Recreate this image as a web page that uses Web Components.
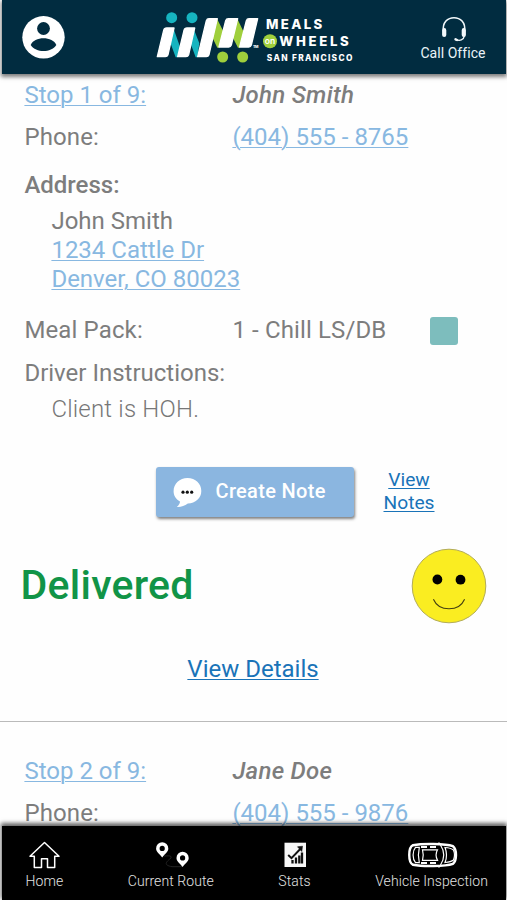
<!DOCTYPE html>
<html lang="en">
<head>
<meta charset="utf-8">
<title>Meals on Wheels San Francisco</title>
<style>
html,body{margin:0;height:100%}
body{background:#fefefe;overflow:hidden;font-family:Roboto,"Liberation Sans",sans-serif;color:#7d7d7d}
</style>
</head>
<body>
<route-app></route-app>
<script>
const define=(name,html)=>{
  const t=document.createElement('template');t.innerHTML=html;
  customElements.define(name,class extends HTMLElement{
    constructor(){super();this.attachShadow({mode:'open'}).append(t.content.cloneNode(true));}
  });
};

define('brand-logo',`<style>:host{display:block;width:200px;height:56px}svg{display:block;overflow:visible}</style>
<svg width="200" height="56" viewBox="155 9 200 56">
 <g transform="translate(150 0) scale(.33333)">
  <g fill="#16b4c0"><circle cx="65" cy="53" r="16.5"/><circle cx="126" cy="53" r="16.5"/>
   <path d="M70 84L90 140L82 172H77L60 125ZM130 84L148 130L142 172H137L120 125Z"/></g>
  <g fill="#9fcf3c"><circle cx="218" cy="171" r="16.5"/><circle cx="278" cy="171" r="16.5"/>
   <path d="M201 56L221 96L208 143H202L186 110ZM262 56L281 96L270 143H264L247 110Z"/></g>
  <g fill="#fff" stroke="#fff" stroke-width="4" stroke-linejoin="round">
   <path d="M22 170L41 91Q43 84 50 84H72L54 164Q52 170 46 170Z"/>
   <path d="M83 170L102 91Q104 84 111 84H134L116 164Q114 170 108 170Z"/>
   <path d="M143 170L169 62Q171 56 177 56H202L177 164Q175 170 169 170Z"/>
   <path d="M207 141L227 62Q229 56 235 56H263L244 135Q242 141 236 141Z"/>
   <path d="M269 141L289 62Q291 56 297 56H323L304 135Q302 141 296 141Z"/></g>
 </g>
 <circle cx="270" cy="41.3" r="7" fill="#9fcf3c"/>
 <g fill="#fff" font-family="Inter,sans-serif" font-weight="800">
  <text x="266" y="29" font-size="13.2" textLength="56.3" lengthAdjust="spacing">MEALS</text>
  <text x="279.3" y="45.8" font-size="13.2" textLength="69.5" lengthAdjust="spacing">WHEELS</text>
  <text x="266.8" y="60.6" font-size="8.3" textLength="85.5" lengthAdjust="spacing">SAN FRANCISCO</text>
  <text x="264.7" y="43.8" font-size="8.5" font-weight="600" textLength="10.5" lengthAdjust="spacingAndGlyphs">on</text>
  <text x="253" y="48" font-size="3.6" textLength="5.5">TM</text>
 </g>
</svg>`);

define('call-office',`<style>:host{display:flex;flex-direction:column;align-items:center;color:#e9f3f8;font-size:14px;line-height:18px}span{letter-spacing:.05px}svg{display:block;margin-left:3px}</style>
<svg width="28" height="28" viewBox="0 0 28 28" fill="none" stroke="#f2f8fb">
<path d="M3.5 15.5C2 6 8 1.7 14 1.7S26 6 24.5 15.5" stroke-width="1.6"/>
<path d="M4.2 14.2v4.8M23.8 14.2v4.8" stroke-width="4.2" stroke-linecap="round"/>
<path d="M24.3 20C23.8 24 19.6 25.4 15.7 23.4" stroke-width="1.4" stroke-linecap="round"/><path d="M15.5 23.3L17 24" stroke-width="2.4" stroke-linecap="round"/></svg>
<span><slot></slot></span>`);

define('app-header',`<style>
:host{display:flex;align-items:flex-start;justify-content:space-between;box-sizing:border-box;height:74px;margin:0 1px 0 2px;padding:0 20.5px 0 20px;background:#012c40;box-shadow:0 2px 4px 1px rgba(0,0,0,.5);position:relative;z-index:2}
.user{display:block;margin-top:15px}brand-logo{margin:9px 0 0 24px}call-office{margin-top:15.5px}
</style>
<svg class="user" width="43" height="44" viewBox="0 0 43 44"><circle cx="21.5" cy="22.3" r="21.2" fill="#fff"/><circle cx="21.5" cy="13.5" r="6.4" fill="#012c40"/><path d="M8.7 30C12 21 31 21 34.3 30C29 38 14 38 8.7 30Z" fill="#012c40"/></svg>
<brand-logo></brand-logo>
<call-office>Call Office</call-office>`);

define('text-link',`<style>:host{color:#88b8e1;text-decoration:underline;text-decoration-thickness:1.3px;text-underline-offset:1.6px}:host([strong]){color:#1973b8}</style><slot></slot>`);

define('info-row',`<style>
:host{display:grid;grid-template-columns:208px 198px 1fr;height:29px;line-height:29px;padding-left:24.4px;white-space:nowrap}
::slotted(b){font-weight:500}::slotted(em){font-weight:500;letter-spacing:.28px}::slotted(span){letter-spacing:.13px}
</style><slot></slot>`);

define('indent-block',`<style>:host{display:block;padding-left:51.4px;line-height:29px}::slotted(*){display:block;width:max-content}:host([light]){font-weight:300;color:#777;letter-spacing:.2px}</style><slot></slot>`);

define('meal-swatch',`<style>:host{display:block;width:28px;height:28px;border-radius:3px;background:#7dbdbd;margin-top:1px}</style>`);

define('note-button',`<style>
:host{display:flex;align-items:center;box-sizing:border-box;width:198px;height:50px;padding-left:17px;gap:14px;border-radius:3px;background:#8bb6e0;box-shadow:1px 2px 3px rgba(0,0,0,.5);color:#fff;font-size:20px;font-weight:500}
svg{display:block}span{position:relative;top:-1px;white-space:nowrap;letter-spacing:.32px}</style>
<svg width="29" height="32" viewBox="0 0 29 32"><path d="M14.5 2C22.5 2 28.3 7.6 28.3 15S22.5 27 14.8 27.6C11.5 30.2 8 31.2 3.8 31C5.8 29.3 7 27.5 7 25.5C2.7 23.2.6 19.4.6 15.3C.6 7.8 6.7 2 14.5 2Z" fill="#fff"/><g fill="#111"><circle cx="10" cy="16.2" r="1.6"/><circle cx="14.3" cy="16.2" r="1.6"/><circle cx="18.7" cy="16.2" r="1.6"/></g></svg>
<span><slot></slot></span>`);

define('note-actions',`<style>:host{display:flex;align-items:flex-start;padding-left:155.5px;gap:28px}::slotted(text-link){width:55px;text-align:center;font-size:19.2px;line-height:23.3px;margin-top:1px}</style><slot></slot>`);

define('smiley-face',`<style>:host{display:block;width:76px;height:76px}</style>
<svg width="76" height="76" viewBox="0 0 76 76"><circle cx="38" cy="38" r="36.8" fill="#faed21" stroke="#b3ac55" stroke-width="1"/><circle cx="26.4" cy="31.5" r="4.9"/><circle cx="49.5" cy="31.7" r="4.9"/><path d="M22.4 51.2C28 64 48 64 53.6 51.2" fill="none" stroke="#444010" stroke-width="1.1"/></svg>`);

define('delivery-status',`<style>:host{display:flex;justify-content:space-between;align-items:center;padding:0 20.5px 0 20.5px;height:76px}span{font-size:41px;line-height:48px;font-weight:500;color:#119447;position:relative;top:-1px;letter-spacing:.25px}</style><span><slot></slot></span><smiley-face></smiley-face>`);

define('stop-list',`<style>
:host{display:block;flex:1;min-height:0;overflow:hidden;font-size:24px;background:#fefefe;padding-top:7px}
.sp{display:flex;justify-content:center;line-height:29px;margin-top:31px;margin-right:1px}
hr{border:0;height:1px;margin:37px 0 0;background:#bababa}
</style>
<info-row><text-link>Stop 1 of 9:</text-link><em>John Smith</em></info-row>
<info-row style="margin-top:13px"><span>Phone:</span><text-link>(404) 555 - 8765</text-link></info-row>
<info-row style="margin-top:19px"><b>Address:</b></info-row>
<indent-block style="margin-top:7px"><span>John Smith</span><text-link>1234 Cattle Dr</text-link><text-link>Denver, CO 80023</text-link></indent-block>
<info-row style="margin-top:22px"><span>Meal Pack:</span><span>1 - Chill LS/DB</span><meal-swatch></meal-swatch></info-row>
<info-row style="margin-top:14px"><span style="letter-spacing:0">Driver Instructions:</span></info-row>
<indent-block light style="margin-top:7px"><span>Client is HOH.</span></indent-block>
<note-actions style="margin-top:43px"><note-button>Create Note</note-button><text-link strong>View Notes</text-link></note-actions>
<delivery-status style="margin-top:31px">Delivered</delivery-status>
<div class="sp"><text-link strong>View Details</text-link></div>
<hr>
<info-row style="margin-top:35px"><text-link>Stop 2 of 9:</text-link><em>Jane Doe</em></info-row>
<info-row style="margin-top:13px"><span>Phone:</span><text-link>(404) 555 - 9876</text-link></info-row>`);

define('nav-item',`<style>:host{display:flex;flex-direction:column;align-items:center;font-size:14px;font-weight:300;color:#e4e4e4;line-height:18px;white-space:nowrap;letter-spacing:.08px}::slotted(svg){display:block;height:34px;overflow:visible}</style><slot name="icon"></slot><slot></slot>`);

define('bottom-nav',`<style>
:host{display:flex;justify-content:space-between;box-sizing:border-box;height:74px;margin:0 1px 0 2px;padding:12px 18px 0 23.5px;background:#000;box-shadow:0 -2px 4px 1px rgba(0,0,0,.6);position:relative;z-index:2}
</style>
<nav-item><svg slot="icon" width="34" height="34" viewBox="0 0 34 34" fill="none" stroke="#fff" stroke-width="1.5" stroke-linejoin="round"><path d="M17.5 4.5L32 18.2H27.7V29.6H20.5V20.8H14.5V29.6H7.3V18.2H3Z"/></svg>Home</nav-item>
<nav-item><svg slot="icon" width="34" height="34" viewBox="0 0 34 34"><path d="M10 18C14 18 18 17 17 20C12 24 9 27 18 28.7H28" fill="none" stroke="#242424"/><g fill="#fff" fill-rule="evenodd"><path id="a" d="M8.2 4.3a6.1 6.1 0 0 1 6.1 6.1c0 3.2-3 5-6.1 9c-3.1-4-6.1-5.8-6.1-9a6.1 6.1 0 0 1 6.1-6.1Zm0 3.5a2.6 2.6 0 1 0 0 5.2a2.6 2.6 0 0 0 0-5.2Z"/><use href="#a" x="20.4" y="9.5"/></g></svg>Current Route</nav-item>
<nav-item><svg slot="icon" width="24" height="34" viewBox="0 0 24 34"><path d="M1.5 4.7H23V29H1.5Z" fill="#f8f8f8"/><g stroke="#111" fill="none"><path d="M5.2 17L8.5 20.2L18 10.2" stroke-width="2"/><path d="M14.5 8.8L19.5 8.2L18.8 13.5Z" fill="#111" stroke-width=".6"/><path d="M9.5 22v3.5M13 19.5v6M16.3 17.5v8M19 14.5v11" stroke-width="2.3"/></g></svg>Stats</nav-item>
<nav-item><svg slot="icon" width="50" height="34" viewBox="0 0 50 34" fill="none" stroke="#fff"><path d="M6 7.2C15 5.4 38 5.4 46 8.2C50 11.5 50 22.5 46 25.8C38 28.6 15 28.6 6 26.8C1 24.5 1 9.5 6 7.2Z" stroke-width="2.4"/><path d="M8.5 9.4H12.3Q10.5 17 12.3 24.6H8.5C5.3 21 5.3 13 8.5 9.4ZM15.5 11.8H30.5Q27.6 17 30.5 22.3H15.5Q17 17 15.5 11.8ZM33.5 7Q40 17 33.5 27M38 9.5Q44 10 46.5 12Q48.5 17 46.5 22Q44 24 38 24.5Q41 17 38 9.5Z" stroke-width="1.2"/><path d="M14 9H20M23 9H29M14 25H20M23 25H29" stroke-width="1.8"/><path d="M32 7V4.5M32 27V29.5" stroke-width="1.6"/></svg>Vehicle Inspection</nav-item>`);

define('route-app',`<style>:host{display:flex;flex-direction:column;height:900px;width:507px}</style><app-header></app-header><stop-list></stop-list><bottom-nav></bottom-nav>`);
</script>
</body>
</html>
